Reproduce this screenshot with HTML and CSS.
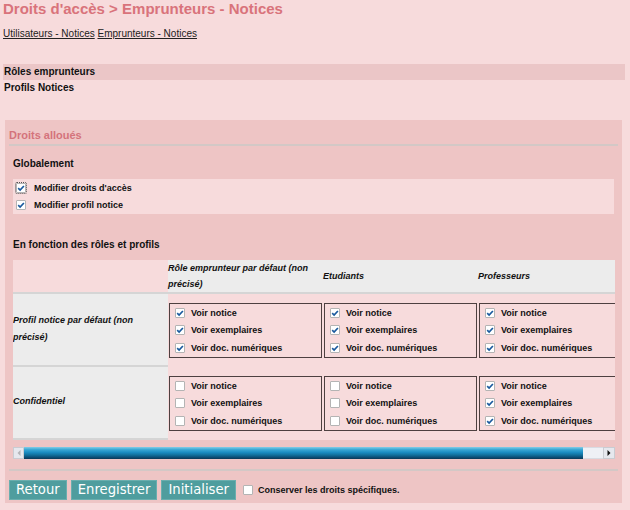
FILE: index.html
```html
<!DOCTYPE html>
<html lang="fr">
<head>
<meta charset="utf-8">
<title>Droits d'accès</title>
<link rel="stylesheet" href="styles.css">
</head>
<body>
<div class="page">
  <h1 class="title">Droits d'accès &gt; Emprunteurs - Notices</h1>
  <nav class="crumbs"><a href="#">Utilisateurs - Notices</a> <a href="#">Emprunteurs - Notices</a></nav>
  <ul class="menu">
    <li class="menu-item active">Rôles emprunteurs</li>
    <li class="menu-item">Profils Notices</li>
  </ul>

  <section class="panel">
    <h2 class="panel-title">Droits alloués</h2>
    <div class="panel-body">
      <h3 class="sub">Globalement</h3>
      <div class="global">
        <label class="grow"><input type="checkbox" class="cb focus" checked>Modifier droits d'accès</label>
        <label class="grow"><input type="checkbox" class="cb" checked>Modifier profil notice</label>
      </div>

      <h3 class="sub sub2">En fonction des rôles et profils</h3>
      <div class="scroll">
        <table class="grid">
          <colgroup><col class="c1"><col class="c2"><col class="c3"><col class="c4"></colgroup>
          <thead>
            <tr>
              <th class="corner"></th>
              <th>Rôle emprunteur par défaut (non précisé)</th>
              <th>Etudiants</th>
              <th>Professeurs</th>
            </tr>
          </thead>
          <tbody>
            <tr>
              <td class="label">Profil notice par défaut (non précisé)</td>
              <td class="cell"><div class="box">
                <label class="brow"><input type="checkbox" class="cb" checked>Voir notice</label>
                <label class="brow"><input type="checkbox" class="cb" checked>Voir exemplaires</label>
                <label class="brow"><input type="checkbox" class="cb" checked>Voir doc. numériques</label>
              </div></td>
              <td class="cell"><div class="box">
                <label class="brow"><input type="checkbox" class="cb" checked>Voir notice</label>
                <label class="brow"><input type="checkbox" class="cb" checked>Voir exemplaires</label>
                <label class="brow"><input type="checkbox" class="cb" checked>Voir doc. numériques</label>
              </div></td>
              <td class="cell"><div class="box">
                <label class="brow"><input type="checkbox" class="cb" checked>Voir notice</label>
                <label class="brow"><input type="checkbox" class="cb" checked>Voir exemplaires</label>
                <label class="brow"><input type="checkbox" class="cb" checked>Voir doc. numériques</label>
              </div></td>
            </tr>
            <tr>
              <td class="label">Confidentiel</td>
              <td class="cell"><div class="box">
                <label class="brow"><input type="checkbox" class="cb">Voir notice</label>
                <label class="brow"><input type="checkbox" class="cb">Voir exemplaires</label>
                <label class="brow"><input type="checkbox" class="cb">Voir doc. numériques</label>
              </div></td>
              <td class="cell"><div class="box">
                <label class="brow"><input type="checkbox" class="cb">Voir notice</label>
                <label class="brow"><input type="checkbox" class="cb">Voir exemplaires</label>
                <label class="brow"><input type="checkbox" class="cb">Voir doc. numériques</label>
              </div></td>
              <td class="cell"><div class="box">
                <label class="brow"><input type="checkbox" class="cb" checked>Voir notice</label>
                <label class="brow"><input type="checkbox" class="cb" checked>Voir exemplaires</label>
                <label class="brow"><input type="checkbox" class="cb" checked>Voir doc. numériques</label>
              </div></td>
            </tr>
          </tbody>
        </table>
      </div>
      <div class="hscroll">
        <span class="sb-btn sb-left"><svg width="4" height="6" viewBox="0 0 4 6"><polygon points="3.5,0 0.5,3 3.5,6" fill="#b4b4b8"/></svg></span>
        <span class="sb-thumb"></span>
        <span class="sb-track"></span>
        <span class="sb-btn sb-right"><svg width="4" height="6" viewBox="0 0 4 6"><polygon points="0.5,0 3.5,3 0.5,6" fill="#111"/></svg></span>
      </div>
    </div>
    <div class="sep"></div>
    <div class="actions">
      <button class="btn" type="button">Retour</button>
      <button class="btn" type="button">Enregistrer</button>
      <button class="btn" type="button">Initialiser</button>
      <label class="keep"><input type="checkbox" class="cb">Conserver les droits spécifiques.</label>
    </div>
  </section>
</div>
</body>
</html>
```
FILE: styles.css
```css
html, body {
  margin: 0;
  padding: 0;
  background: #f7dbdc;
}
body {
  font-family: "Liberation Sans", Arial, sans-serif;
  color: #111;
}
.page {
  padding: 0 5px 0 3px;
}
.title {
  margin: 0;
  font-size: 15px;
  line-height: 18px;
  font-weight: bold;
  color: #d9737b;
}
.crumbs {
  margin-top: 10px;
  font-size: 10px;
  line-height: 12px;
}
.crumbs a {
  color: #222;
  text-decoration: underline;
}
.menu {
  list-style: none;
  margin: 24px 0 0;
  padding: 0;
}
.menu-item {
  font-size: 10px;
  font-weight: bold;
  line-height: 16px;
  padding-left: 1px;
}
.menu-item.active {
  background: #ebc6c7;
}
.panel {
  margin: 24px 3px 0 2px;
  padding: 8px 0 3px;
  background: #eec5c5;
}
.panel-title {
  margin: 0 4px;
  padding-bottom: 2px;
  font-size: 11px;
  line-height: 14px;
  font-weight: bold;
  color: #d4737b;
  border-bottom: 2px solid #d3c8c6;
}
.panel-body {
  padding: 0 7px 0 8px;
}
.sub {
  margin: 11px 0 8px;
  font-size: 10px;
  line-height: 14px;
  font-weight: bold;
}
.sub2 {
  margin-top: 24px;
}
.global {
  background: #f7dbdc;
  padding-left: 3px;
  margin-right: 1px;
}
.grow {
  display: flex;
  align-items: center;
  height: 17.5px;
  font-size: 9px;
  font-weight: bold;
}
.grow .cb {
  margin-right: 8px;
}
.cb {
  -webkit-appearance: none;
  appearance: none;
  box-sizing: border-box;
  width: 10px;
  height: 10px;
  margin: 0 6px 0 0;
  flex: none;
  border: 1px solid #b4b4b4;
  border-radius: 1px;
  background: #fff;
}
.cb:checked {
  background: #fff url("data:image/svg+xml;utf8,<svg xmlns='http://www.w3.org/2000/svg' width='8' height='8' viewBox='0 0 8 8'><path d='M1.2 4.2 L3.1 6 L6.9 2' fill='none' stroke='%231a5a9e' stroke-width='1.7'/></svg>") center / 8px 8px no-repeat;
}
.cb.focus {
  outline: 1px dotted #555;
  outline-offset: 0;
}
.scroll {
  overflow: hidden;
}
.grid {
  width: 625px;
  table-layout: fixed;
  border-collapse: separate;
  border-spacing: 0;
  font-size: 9px;
}
.c1, .c2, .c3 { width: 155px; }
.c4 { width: 160px; }
.grid th {
  height: 32px;
  padding: 0;
  text-align: left;
  vertical-align: middle;
  font-weight: bold;
  font-style: italic;
  line-height: 16px;
  background: #ececec;
  border-bottom: 2px solid #d5d5d5;
}
.grid th.corner {
  background: #f7dbdc;
}
.grid td {
  padding: 0;
  vertical-align: middle;
}
.grid td.label {
  background: #ececec;
  font-weight: bold;
  font-style: italic;
  line-height: 17.6px;
  border-bottom: 2px solid #d5d5d5;
  padding-right: 20px;
}
.grid td.cell {
  background: #f7dbdc;
  padding: 9px 1px 9px 1px;
}
.box {
  border: 1px solid #4d4040;
  padding-left: 5px;
}
.brow {
  display: flex;
  align-items: center;
  height: 17.6px;
  font-weight: bold;
  white-space: nowrap;
}
.hscroll {
  display: flex;
  height: 12px;
  margin-top: 7px;
}
.sb-btn {
  box-sizing: border-box;
  display: flex;
  align-items: center;
  justify-content: center;
  width: 11px;
  background: #e6e8ee;
  border: 1px solid #c9ccd2;
}
.sb-right {
  width: 12px;
}
.sb-thumb {
  flex: 0 0 559px;
  background: linear-gradient(to bottom, #86cde6 0%, #3aa7d4 22%, #1a8cc2 45%, #11729f 65%, #0b4f78 85%, #0a3856 100%);
}
.sb-track {
  flex: 1;
  background: #eef0f5;
  border-top: 1px solid #d8dbe2;
  border-bottom: 1px solid #d8dbe2;
}
.sep {
  margin: 10px 4px 0;
  height: 2px;
  background: #d3c8c6;
}
.actions {
  display: flex;
  align-items: center;
  gap: 4px;
  padding: 9px 0 0 4px;
}
.btn {
  margin: 0;
  padding: 0 6px;
  height: 20px;
  font-family: "DejaVu Sans", sans-serif;
  font-size: 13.2px;
  line-height: 18px;
  color: #fff;
  background: #4f9d9e;
  border: 1px solid #6aaeae;
  border-radius: 0;
}
.keep {
  display: flex;
  align-items: center;
  margin-left: 3px;
  font-size: 9px;
  font-weight: bold;
}
.keep .cb {
  margin-right: 5px;
}
```
